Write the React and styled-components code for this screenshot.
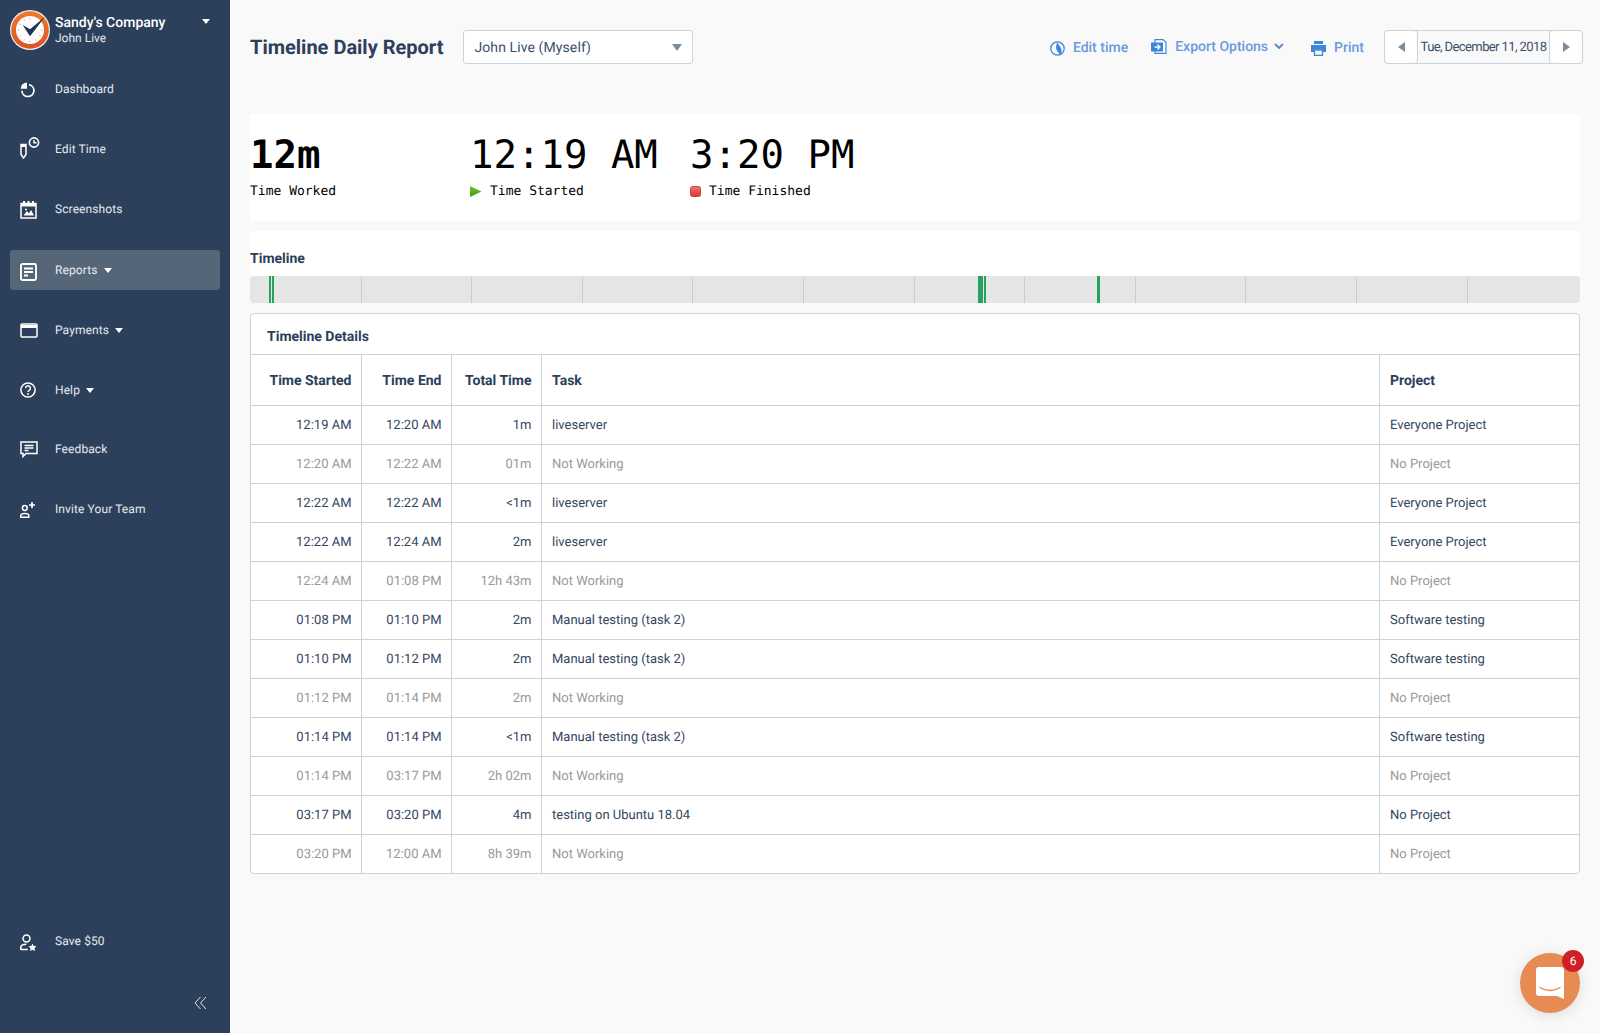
import React from 'react';
import styled, { createGlobalStyle } from 'styled-components';

const GlobalStyle = createGlobalStyle`
  html, body { margin: 0; padding: 0; height: 100%; background: #f9f9f9; }
  #root { height: 100%; }
  * { box-sizing: border-box; }
  body {
    font-family: Roboto, "Liberation Sans", sans-serif;
    color: #2b3f5c;
    text-rendering: geometricPrecision;
  }
`;

// * ---------- STYLE ---------- *
const Page = styled.div`
  display: flex;
  height: 1033px;
  overflow: hidden;
`;
const Sidebar = styled.aside`
  width: 230px;
  flex: none;
  background: #2c405b;
  color: #fff;
  display: flex;
  flex-direction: column;
  padding: 10px 10px 0;
`;
const Brand = styled.div`
  display: flex;
  height: 40px;
  align-items: center;
`;
const BrandText = styled.div`
  margin-left: 5px;
  display: flex;
  flex-direction: column;
  flex: 1;
`;
const Company = styled.span`
  font-size: 14px;
  font-weight: 500;
  line-height: 17px;
`;
const UserName = styled.span`
  font-size: 12px;
  line-height: 15px;
  margin-top: -1px;
  color: #e3e7ec;
`;
const Caret = styled.span`
  display: inline-block;
  width: 0;
  height: 0;
  border-left: ${p => p.size || 4}px solid transparent;
  border-right: ${p => p.size || 4}px solid transparent;
  border-top: ${p => (p.size ? p.size + 2 : 5)}px solid ${p => p.color || '#fff'};
  margin-left: ${p => p.gap || 0}px;
`;
const BrandCaret = styled(Caret)`
  margin: 0 10px 18px 0;
`;
const Nav = styled.nav`
  display: flex;
  flex-direction: column;
  margin-top: 19px;
  flex: 1;
`;
const NavItem = styled.div`
  height: 40px;
  margin-bottom: ${p => p.gap || 20}px;
  display: flex;
  align-items: center;
  padding-left: 10px;
  border-radius: 3px;
  font-size: 12px;
  color: #e6e9ee;
  letter-spacing: 0.1px;
  background: ${p => (p.$active ? '#566679' : 'transparent')};
`;
const NavIcon = styled.span`
  width: 35px;
  flex: none;
  display: flex;
  align-items: center;
  margin-top: ${p => p.drop || 0}px;
`;
const BottomNav = styled.div`
  display: flex;
  flex-direction: column;
  padding-bottom: 17px;
`;
const SaveItem = styled(NavItem)`
  margin-bottom: 35px;
`;
const Collapse = styled.div`
  display: flex;
  justify-content: flex-end;
  padding-right: 13px;
  height: 20px;
`;
const Main = styled.main`
  flex: 1;
  min-width: 0;
  padding: 30px 20px 0;
  position: relative;
`;
const Toolbar = styled.div`
  display: flex;
  align-items: center;
  height: 34px;
  margin-right: -3px;
`;
const Title = styled.h1`
  margin: 0 20px 0 0;
  font-size: 20px;
  font-weight: 700;
  color: #2c405b;
  line-height: 34px;
`;
const Select = styled.div`
  width: 230px;
  height: 34px;
  border: 1px solid #c9d3dc;
  border-radius: 3px;
  background: #fff;
  display: flex;
  align-items: center;
  justify-content: space-between;
  padding: 1px 10px 0;
  font-size: 14px;
  color: #3c4f69;
  letter-spacing: 0.1px;
`;
const Actions = styled.div`
  margin-left: auto;
  display: flex;
  align-items: center;
`;
const ActionLink = styled.a`
  display: flex;
  align-items: center;
  font-size: 14px;
  font-weight: 500;
  color: #689ae0;
  margin-right: ${p => p.gap}px;
  margin-top: ${p => p.drop || 0}px;
  margin-bottom: ${p => p.lift || 0}px;
  svg { margin-right: 8px; }
`;
const DatePicker = styled.div`
  display: flex;
  width: 199px;
  height: 34px;
  border: 1px solid #c9d3dc;
  border-radius: 4px;
  background: #f9f9f9;
  align-items: stretch;
`;
const DateButton = styled.div`
  width: 34px;
  flex: none;
  background: #fff;
  border-radius: 4px;
  display: flex;
  align-items: center;
  justify-content: center;
  margin: -1px;
  border: 1px solid #c9d3dc;
`;
const DateText = styled.div`
  flex: 1;
  display: flex;
  align-items: center;
  justify-content: center;
  font-size: 13px;
  letter-spacing: -0.6px;
  color: #3c4f69;
  white-space: nowrap;
`;
const Arrow = styled.span`
  width: 0;
  height: 0;
  border-top: 5px solid transparent;
  border-bottom: 5px solid transparent;
  ${p => (p.$left ? 'border-right: 7px solid #7b8d9c;' : 'border-left: 7px solid #7b8d9c;')}
`;
const StatsCard = styled.section`
  margin-top: 50px;
  height: 107px;
  background: #fff;
  border-radius: 3px;
  display: flex;
  padding-top: 19px;
`;
const Stat = styled.div`
  width: ${p => p.width}px;
  font-family: "DejaVu Sans Mono", "Liberation Mono", monospace;
  color: #000;
`;
const StatValue = styled.div`
  font-size: 39px;
  line-height: 46px;
  font-weight: ${p => (p.$bold ? 700 : 400)};
`;
const StatLabel = styled.div`
  font-size: 13px;
  line-height: 16px;
  margin-top: 5px;
  display: flex;
  align-items: center;
`;
const StatMark = styled.svg`
  margin: 0 8px 2px 0;
  flex: none;
`;
const TimelineCard = styled.section`
  margin-top: 10px;
  height: 72px;
  background: #fff;
  border-radius: 3px;
  display: flex;
  flex-direction: column;
  justify-content: flex-end;
`;
const TimelineTitle = styled.div`
  font-size: 14px;
  font-weight: 700;
  color: #2c405b;
  line-height: 17px;
  margin-bottom: 8px;
`;
const TimelineBar = styled.div`
  height: 27px;
  padding-left: 1px;
  background: #e5e5e5;
  border-radius: 4px;
  position: relative;
  display: flex;
`;
const Tick = styled.div`
  width: 110.6px;
  flex: none;
  border-right: 1px solid #cbcbcb;
  margin-top: 1px;
`;
const Mark = styled.div`
  position: absolute;
  top: 0;
  bottom: 0;
  background: #25a25d;
`;
const DetailsCard = styled.section`
  margin-top: 10px;
  background: #fff;
  border: 1px solid #c9d3dc;
  border-radius: 4px;
`;
const DetailsTitle = styled.div`
  height: 40px;
  display: flex;
  align-items: center;
  padding: 5px 0 0 16px;
  font-size: 14px;
  font-weight: 700;
  color: #2c405b;
`;
const Table = styled.table`
  width: 100%;
  border-collapse: collapse;
  table-layout: fixed;
  tr:last-child td { height: 38px; padding-top: 1px; }
`;
const Th = styled.th`
  height: 51px;
  border-top: 1px solid #c9d3dc;
  border-left: 1px solid #c9d3dc;
  padding: 1px ${p => (p.align === 'right' ? 9 : 10)}px 0 ${p => (p.align === 'right' ? 10 : 10.5)}px;
  font-size: 14px;
  font-weight: 700;
  color: #2c405b;
  text-align: ${p => p.align || 'left'};
  white-space: nowrap;
  &:first-child { border-left: 0; }
`;
const Td = styled.td`
  height: 39px;
  border-top: 1px solid #c9d3dc;
  border-left: 1px solid #c9d3dc;
  padding: 0 ${p => (p.align === 'right' ? 9 : 10)}px 0 ${p => (p.align === 'right' ? 10 : 10.5)}px;
  font-size: 13px;
  color: ${p => (p.$muted ? '#999' : '#33465f')};
  text-align: ${p => p.align || 'left'};
  white-space: nowrap;
  &:first-child { border-left: 0; }
`;
const ChatButton = styled.div`
  position: absolute;
  right: 20px;
  top: 953px;
  width: 60px;
  height: 60px;
  border-radius: 50%;
  background: #e58b53;
  box-shadow: 0 2px 14px rgba(0, 0, 0, 0.12);
  display: flex;
  align-items: center;
  justify-content: center;
`;
const ChatBadge = styled.div`
  position: absolute;
  right: -4px;
  top: -3px;
  width: 22px;
  height: 22px;
  border-radius: 50%;
  background: #cf2027;
  color: #fff;
  font-size: 12px;
  display: flex;
  align-items: center;
  justify-content: center;
`;

// * ---------- ICONS ---------- *
const Logo = () => (
  <svg width="40" height="40" viewBox="0 0 40 40">
    <defs>
      <linearGradient id="logoRing" x1="0" y1="0" x2="0" y2="1">
        <stop offset="0" stopColor="#ee7a2c" />
        <stop offset="1" stopColor="#dd5226" />
      </linearGradient>
    </defs>
    <circle cx="20" cy="20" r="20" fill="#f2efec" />
    <circle cx="20" cy="20" r="18.8" fill="url(#logoRing)" />
    <circle cx="20" cy="20" r="14" fill="#fff" />
    <path d="M20 7.500v2M20 30.500v2M7.500 20h2M30.500 20h2M13.800 9.200l.8 1.500M25.400 29.300l.8 1.500M9.200 13.800l1.500.8M29.300 25.400l1.500.8M9.200 26.200l1.500-.8M13.800 30.800l.8-1.500" stroke="#e9a78c" strokeWidth="0.900" />
    <path d="M12.700 15 20 19.300 35 6.700 20 26.200z" fill="#1f3358" />
  </svg>
);
const DashboardIcon = () => (
  <svg width="16" height="16" viewBox="0 0 16 16" fill="none">
    <path d="M7 0.500v6.200H0.700A6.500 6.500 0 0 1 7 .5z" fill="#fff" />
    <path d="M9 2.600a6 6 0 1 1-7.100 6.200" stroke="#fff" strokeWidth="1.700" />
  </svg>
);
const EditTimeIcon = () => (
  <svg width="20" height="22" viewBox="0 0 20 22" fill="none">
    <path d="M1 7.500h5v10l-2.500 3.500L1 17.500z" stroke="#fff" strokeWidth="1.500" />
    <path d="M1 7h5v3H1z" fill="#fff" />
    <circle cx="14" cy="5.500" r="4.600" stroke="#fff" strokeWidth="1.600" />
    <path d="M14 3v2.800h2.500" stroke="#fff" strokeWidth="1.400" />
  </svg>
);
const ScreenshotsIcon = () => (
  <svg width="17" height="18" viewBox="0 0 17 18" fill="none">
    <path d="M3 0h2v3H3zM7.500 0h2v3h-2zM12 0h2v3h-2z" fill="#fff" />
    <rect x="1" y="2.500" width="15" height="14.500" stroke="#fff" strokeWidth="1.500" />
    <path d="M1 2.500h15v3H1z" fill="#fff" />
    <path d="M3.500 14.500 7 10l2 2.500 2-3.500 3 5.500z" fill="#fff" />
    <circle cx="6" cy="8.500" r="1" fill="#fff" />
  </svg>
);
const ReportsIcon = () => (
  <svg width="17" height="18" viewBox="0 0 17 18" fill="none">
    <rect x="1" y="1" width="15" height="16" rx="1.500" stroke="#fff" strokeWidth="1.900" />
    <path d="M4 5.500h9M4 9h9M4 12.500h4" stroke="#fff" strokeWidth="1.800" />
  </svg>
);
const PaymentsIcon = () => (
  <svg width="18" height="15" viewBox="0 0 18 15" fill="none">
    <rect x="1" y="1" width="16" height="13" rx="1" stroke="#fff" strokeWidth="1.500" />
    <path d="M1 3.500h16" stroke="#fff" strokeWidth="3" />
  </svg>
);
const HelpIcon = () => (
  <svg width="16" height="16" viewBox="0 0 16 16" fill="none">
    <circle cx="8" cy="8" r="7.100" stroke="#fff" strokeWidth="1.500" />
    <path d="M5.600 6.200a2.400 2.400 0 1 1 3.600 2.100c-.8.500-1.200.9-1.200 1.700" stroke="#fff" strokeWidth="1.400" />
    <circle cx="8" cy="12" r="0.900" fill="#fff" />
  </svg>
);
const FeedbackIcon = () => (
  <svg width="18" height="17" viewBox="0 0 18 17" fill="none">
    <path d="M1 1h16v11.500H6L3 15.500v-3H1z" stroke="#fff" strokeWidth="1.500" />
    <path d="M4.500 4.500h9M4.500 7h9M4.500 9.500h4" stroke="#fff" strokeWidth="1.400" />
  </svg>
);
const InviteIcon = () => (
  <svg width="16" height="16" viewBox="0 0 16 16" fill="none">
    <circle cx="4.800" cy="6" r="2.400" stroke="#fff" strokeWidth="1.500" />
    <path d="M.8 15.200v-1.800c0-1.200 1.600-2 4-2s4 .8 4 2v1.800z" stroke="#fff" strokeWidth="1.500" />
    <path d="M12 0v6M9 3h6" stroke="#fff" strokeWidth="1.700" />
  </svg>
);
const SaveIcon = () => (
  <svg width="17" height="17" viewBox="0 0 17 17" fill="none">
    <circle cx="6.500" cy="4.500" r="3.500" stroke="#fff" strokeWidth="1.500" />
    <path d="M.8 16v-2.500c0-2 2.500-3.200 5.500-3.200M.8 15.500h7" stroke="#fff" strokeWidth="1.600" />
    <path d="M12.500 9.500l1.200 2.500 2.800.3-2 1.900.5 2.800-2.500-1.300-2.500 1.300.5-2.800-2-1.900 2.800-.3z" fill="#fff" />
  </svg>
);
const CollapseIcon = () => (
  <svg width="13" height="14" viewBox="0 0 13 14" fill="none">
    <path d="M6.500 1 1 7l5.500 6M12 1 6.500 7l5.500 6" stroke="#dfe3e8" strokeWidth="1" />
  </svg>
);
const EditTimeLinkIcon = () => (
  <svg width="15" height="15" viewBox="0 0 15 15" fill="none">
    <circle cx="7.500" cy="7.500" r="6.700" stroke="#3c86d8" strokeWidth="1.300" />
    <path d="M7 1.500c2 2 4 5 4.500 7.500.3 1.500-.3 3-1 4.500C8 12 6 9 6 6z" fill="#3c86d8" />
  </svg>
);
const ExportIcon = () => (
  <svg width="16" height="15" viewBox="0 0 16 15" fill="none">
    <path d="M4 .6h8l3 3v10.800H4z" fill="#fff" stroke="#3c86d8" strokeWidth="1.200" />
    <path d="M0 3.500h12v9H0z" fill="#3c86d8" />
    <path d="M3.500 8h5M6.500 5.500 9 8l-2.500 2.500" stroke="#fff" strokeWidth="1.300" />
  </svg>
);
const PrintIcon = () => (
  <svg width="15" height="15" viewBox="0 0 15 15" fill="none">
    <path d="M3 0h9v3H3z" fill="#3c86d8" />
    <path d="M0 4h15v7h-3V8.500H3V11H0z" fill="#3c86d8" />
    <path d="M3.500 9h8v5.300h-8z" stroke="#3c86d8" strokeWidth="1.300" />
  </svg>
);
const ChevronIcon = () => (
  <svg width="10" height="7" viewBox="0 0 10 7" fill="none" style={{ marginRight: 0, marginLeft: 6 }}>
    <path d="M1 1l4 4 4-4" stroke="#5f84b8" strokeWidth="1.800" />
  </svg>
);
const ChatIcon = () => (
  <svg width="28" height="32" viewBox="0 0 28 32">
    <path d="M3 0h22a3 3 0 0 1 3 3v29l-7-3H3a3 3 0 0 1-3-3V3a3 3 0 0 1 3-3z" fill="#fff" />
    <path d="M4 20.500c6 4 14 4 20 0" stroke="#e58b53" strokeWidth="1.500" fill="none" strokeLinecap="round" />
  </svg>
);

// * ---------- DATA ---------- *
const NAV = [
  { label: 'Dashboard', icon: <DashboardIcon />, drop: 2 },
  { label: 'Edit Time', icon: <EditTimeIcon />, drop: -3 },
  { label: 'Screenshots', icon: <ScreenshotsIcon />, gap: 21, drop: 2 },
  { label: 'Reports', icon: <ReportsIcon />, caret: true, active: true, drop: 4 },
  { label: 'Payments', icon: <PaymentsIcon />, caret: true },
  { label: 'Help', icon: <HelpIcon />, caret: true, gap: 19 },
  { label: 'Feedback', icon: <FeedbackIcon /> },
  { label: 'Invite Your Team', icon: <InviteIcon />, drop: 2 },
];
const W = ['liveserver', 'Everyone Project'];
const M = ['Manual testing (task 2)', 'Software testing'];
const ROWS = [
  ['12:19 AM', '12:20 AM', '1m', ...W],
  ['12:20 AM', '12:22 AM', '01m'],
  ['12:22 AM', '12:22 AM', '<1m', ...W],
  ['12:22 AM', '12:24 AM', '2m', ...W],
  ['12:24 AM', '01:08 PM', '12h 43m'],
  ['01:08 PM', '01:10 PM', '2m', ...M],
  ['01:10 PM', '01:12 PM', '2m', ...M],
  ['01:12 PM', '01:14 PM', '2m'],
  ['01:14 PM', '01:14 PM', '<1m', ...M],
  ['01:14 PM', '03:17 PM', '2h 02m'],
  ['03:17 PM', '03:20 PM', '4m', 'testing on Ubuntu 18.04', 'No Project'],
  ['03:20 PM', '12:00 AM', '8h 39m'],
];
// left offset and width of the worked spans, px inside the bar
const MARKS = [[19, 2], [22, 2], [728, 5], [734, 2], [847, 3]];

const App = () => (
  <Page>
    <GlobalStyle />
    <Sidebar>
      <Brand>
        <Logo />
        <BrandText>
          <Company>Sandy's Company</Company>
          <UserName>John Live</UserName>
        </BrandText>
        <BrandCaret />
      </Brand>
      <Nav>
        {NAV.map(item => (
          <NavItem key={item.label} $active={item.active} gap={item.gap}>
            <NavIcon drop={item.drop}>{item.icon}</NavIcon>
            {item.label}
            {item.caret && <Caret gap={6} />}
          </NavItem>
        ))}
      </Nav>
      <BottomNav>
        <SaveItem>
          <NavIcon drop={2}><SaveIcon /></NavIcon>
          Save $50
        </SaveItem>
        <Collapse><CollapseIcon /></Collapse>
      </BottomNav>
    </Sidebar>
    <Main>
      <Toolbar>
        <Title>Timeline Daily Report</Title>
        <Select>
          John Live (Myself)
          <Caret color="#7b8d9c" size={5} />
        </Select>
        <Actions>
          <ActionLink gap={23} drop={2}><EditTimeLinkIcon />Edit time</ActionLink>
          <ActionLink gap={27} lift={1}><ExportIcon />Export Options<ChevronIcon /></ActionLink>
          <ActionLink gap={20} drop={2}><PrintIcon />Print</ActionLink>
          <DatePicker>
            <DateButton><Arrow $left /></DateButton>
            <DateText>Tue, December 11, 2018</DateText>
            <DateButton><Arrow /></DateButton>
          </DatePicker>
        </Actions>
      </Toolbar>
      <StatsCard>
        <Stat width={220}>
          <StatValue $bold>12m</StatValue>
          <StatLabel>Time Worked</StatLabel>
        </Stat>
        <Stat width={220}>
          <StatValue>12:19 AM</StatValue>
          <StatLabel>
            <StatMark width="12" height="11" viewBox="0 0 12 11">
              <defs>
                <linearGradient id="startMark" x1="0" y1="0" x2="0" y2="1">
                  <stop offset="0" stopColor="#78c23c" />
                  <stop offset="1" stopColor="#3f9a08" />
                </linearGradient>
              </defs>
              <path d="M0 0l11.500 5.500L0 11z" fill="url(#startMark)" />
            </StatMark>
            Time Started
          </StatLabel>
        </Stat>
        <Stat width={220}>
          <StatValue>3:20 PM</StatValue>
          <StatLabel>
            <StatMark width="11" height="11" viewBox="0 0 11 11">
              <defs>
                <linearGradient id="stopMark" x1="0" y1="0" x2="0" y2="1">
                  <stop offset="0" stopColor="#f0796c" />
                  <stop offset="1" stopColor="#d9352b" />
                </linearGradient>
              </defs>
              <rect x=".5" y=".5" width="10" height="10" rx="2" fill="url(#stopMark)" stroke="#c8473d" />
            </StatMark>
            Time Finished
          </StatLabel>
        </Stat>
      </StatsCard>
      <TimelineCard>
        <TimelineTitle>Timeline</TimelineTitle>
        <TimelineBar>
          {Array.from({ length: 11 }, (_, i) => <Tick key={i} />)}
          {MARKS.map(([left, width]) => <Mark key={left} style={{ left, width }} />)}
        </TimelineBar>
      </TimelineCard>
      <DetailsCard>
        <DetailsTitle>Timeline Details</DetailsTitle>
        <Table>
          <colgroup>
            <col style={{ width: 110 }} />
            <col style={{ width: 90 }} />
            <col style={{ width: 90 }} />
            <col />
            <col style={{ width: 200 }} />
          </colgroup>
          <thead>
            <tr>
              <Th align="right">Time Started</Th>
              <Th align="right">Time End</Th>
              <Th align="right">Total Time</Th>
              <Th>Task</Th>
              <Th>Project</Th>
            </tr>
          </thead>
          <tbody>
            {ROWS.map((row, i) => {
              const muted = row.length === 3;
              return (
                <tr key={i}>
                  <Td align="right" $muted={muted}>{row[0]}</Td>
                  <Td align="right" $muted={muted}>{row[1]}</Td>
                  <Td align="right" $muted={muted}>{row[2]}</Td>
                  <Td $muted={muted}>{row[3] || 'Not Working'}</Td>
                  <Td $muted={muted}>{row[4] || 'No Project'}</Td>
                </tr>
              );
            })}
          </tbody>
        </Table>
      </DetailsCard>
      <ChatButton>
        <ChatIcon />
        <ChatBadge>6</ChatBadge>
      </ChatButton>
    </Main>
  </Page>
);

export default App;
